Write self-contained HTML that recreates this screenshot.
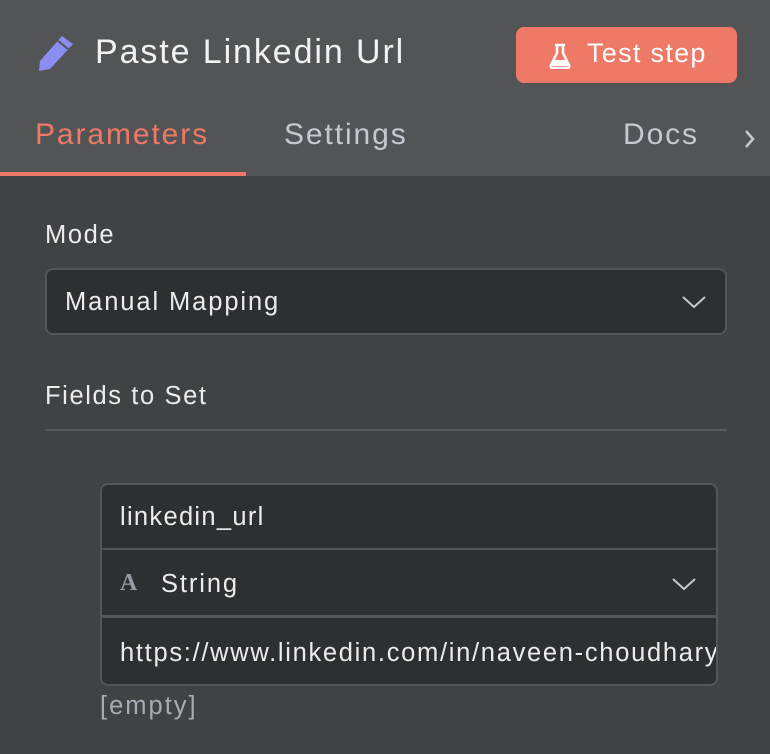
<!DOCTYPE html>
<html><head><style>
*{box-sizing:border-box;margin:0;padding:0}
body{width:770px;height:754px;background:#414244;font-family:"Liberation Sans",sans-serif;position:relative;overflow:hidden}
.hdr{position:absolute;left:0;top:0;width:770px;height:176px;background:#535456}
.abs{position:absolute;white-space:nowrap}
.title{left:95px;top:33px;font-size:34px;color:#f2f2f3;letter-spacing:1.9px}
.btn{left:516px;top:27px;width:221px;height:56px;background:#ee7966;border-radius:8px;color:#fff;font-size:27px;letter-spacing:1.3px}
.tab{top:118px;font-size:30px;color:#c6c8d0;letter-spacing:1.9px}
.ul{left:0;top:172px;width:246px;height:4px;background:#ee7966}
.lbl{font-size:25.5px;color:#ececef;letter-spacing:1.6px}
.box{border:2px solid #545557;background:#2e2f30;border-radius:8px}
.t{font-size:25.5px;color:#ececef;letter-spacing:1.9px}
</style></head><body>
<div class="hdr"></div>
<svg class="abs" style="left:37px;top:34px" width="38" height="38" viewBox="0 0 38 38"><path d="M25 2 L36 10 L13 35 L2 37 L3 27 Z" fill="#8a8ef0"/><path d="M21 7 L31 15" stroke="#535456" stroke-width="2"/></svg>
<div class="abs title">Paste Linkedin Url</div>
<div class="abs btn"><svg class="abs" style="left:33px;top:16px" width="22" height="26" viewBox="0 0 22 26"><path d="M6 2h10M8 2v8L2 22a2 2 0 0 0 2 3h14a2 2 0 0 0 2-3L14 10V2" fill="none" stroke="#fff" stroke-width="2.5"/><path d="M5 17h12l3 6H2z" fill="#fff"/></svg><span class="abs" style="left:71px;top:11px">Test step</span></div>
<div class="abs tab" style="left:35px;color:#ee7966">Parameters</div>
<div class="abs tab" style="left:284px">Settings</div>
<div class="abs tab" style="left:623px">Docs</div>
<svg class="abs" style="left:743px;top:128px" width="14" height="22" viewBox="0 0 14 22"><path d="M3 3l7 8-7 8" fill="none" stroke="#c6c8d0" stroke-width="2.5"/></svg>
<div class="abs ul"></div>
<div class="abs lbl" style="left:45px;top:221px">Mode</div>
<div class="abs box" style="left:45px;top:268px;width:682px;height:67px"></div>
<div class="abs t" style="left:65px;top:288px">Manual Mapping</div>
<svg class="abs" style="left:681px;top:294px" width="26" height="16" viewBox="0 0 26 16"><path d="M2 3l11 10 11-10" fill="none" stroke="#c6c8d0" stroke-width="2"/></svg>
<div class="abs lbl" style="left:45px;top:382px">Fields to Set</div>
<div class="abs" style="left:45px;top:429px;width:682px;height:2px;background:#58595b"></div>
<div class="abs box" style="left:100px;top:483px;width:618px;height:203px"></div>
<div class="abs" style="left:101px;top:548px;width:616px;height:2px;background:#545557"></div>
<div class="abs" style="left:101px;top:615px;width:616px;height:3px;background:#545557"></div>
<div class="abs t" style="left:120px;top:503px;letter-spacing:1.3px">linkedin_url</div>
<div class="abs" style="left:120px;top:570px;font-size:24px;font-weight:bold;color:#9a9ca5;font-family:'Liberation Serif',serif">A</div>
<div class="abs t" style="left:161px;top:570px">String</div>
<svg class="abs" style="left:671px;top:576px" width="26" height="16" viewBox="0 0 26 16"><path d="M2 3l11 10 11-10" fill="none" stroke="#c6c8d0" stroke-width="2"/></svg>
<div class="abs t" style="left:120px;top:639px;width:596px;overflow:hidden;letter-spacing:1.7px">https://www.linkedin.com/in/naveen-choudhary</div>
<div class="abs" style="left:100px;top:692px;font-size:25.5px;color:#a9abb3;letter-spacing:2px">[empty]</div>
</body></html>
